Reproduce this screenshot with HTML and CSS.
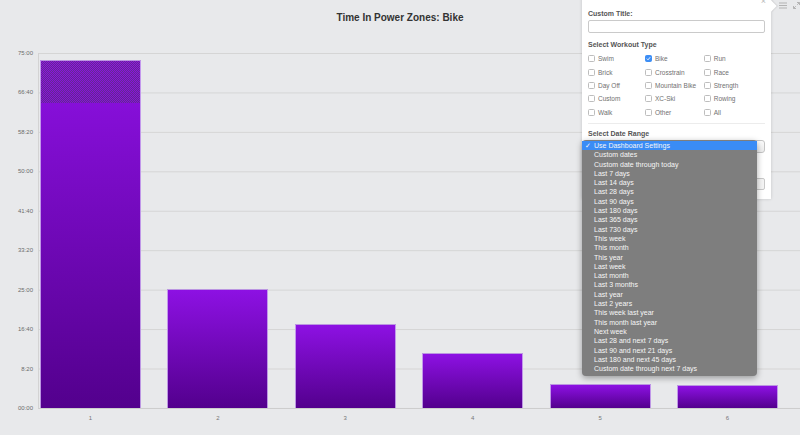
FILE: index.html
```html
<!DOCTYPE html>
<html>
<head>
<meta charset="utf-8">
<title>Time In Power Zones: Bike</title>
<link rel="stylesheet" href="styles.css">
</head>
<body>
<h1 class="title">Time In Power Zones: Bike</h1>
<div class="chart">
  <div class="yaxis">
    <span>75:00</span><span>66:40</span><span>58:20</span><span>50:00</span><span>41:40</span><span>33:20</span><span>25:00</span><span>16:40</span><span>8:20</span><span>00:00</span>
  </div>
  <div class="plotwrap">
    <div class="plot">
      <div class="bar dither" style="height:348px"></div>
      <div class="bar" style="height:119px"></div>
      <div class="bar" style="height:84px"></div>
      <div class="bar" style="height:55px"></div>
      <div class="bar" style="height:24px"></div>
      <div class="bar" style="height:23px"></div>
    </div>
    <div class="xlabels"><span>1</span><span>2</span><span>3</span><span>4</span><span>5</span><span>6</span></div>
  </div>
</div>

<div class="tools">
  <svg class="ico" width="8" height="7" viewBox="0 0 8 7"><path d="M0 1h8M0 3.5h8M0 6h8" stroke="#b3b3b3" stroke-width="1"/></svg>
  <svg class="ico" width="7" height="7" viewBox="0 0 7 7"><path d="M4 0.5h2.5v2.5M6.5 0.5L4.2 2.8M3 6.5H0.5V4M0.5 6.5L2.8 4.2" stroke="#b3b3b3" stroke-width="1" fill="none"/></svg>
</div>

<div class="panel">
  <span class="close">×</span>
  <div class="hd">Custom Title:</div>
  <div class="input"></div>
  <div class="hd gap-hd">Select Workout Type</div>
  <div class="types">
    <label class="opt"><span class="box"></span>Swim</label>
    <label class="opt"><span class="box on"><svg width="5" height="5" viewBox="0 0 5 5"><path d="M0.8 2.6L2 3.8L4.2 1.2" stroke="#fff" stroke-width="0.9" fill="none"/></svg></span>Bike</label>
    <label class="opt"><span class="box"></span>Run</label>
    <label class="opt"><span class="box"></span>Brick</label>
    <label class="opt"><span class="box"></span>Crosstrain</label>
    <label class="opt"><span class="box"></span>Race</label>
    <label class="opt"><span class="box"></span>Day Off</label>
    <label class="opt"><span class="box"></span>Mountain Bike</label>
    <label class="opt"><span class="box"></span>Strength</label>
    <label class="opt"><span class="box"></span>Custom</label>
    <label class="opt"><span class="box"></span>XC-Ski</label>
    <label class="opt"><span class="box"></span>Rowing</label>
    <label class="opt"><span class="box"></span>Walk</label>
    <label class="opt"><span class="box"></span>Other</label>
    <label class="opt"><span class="box"></span>All</label>
  </div>
  <div class="divider"></div>
  <div class="hd gap-hd2">Select Date Range</div>
  <div class="select"></div>
  <div class="btn"></div>
</div>

<ul class="menu">
  <li class="sel">Use Dashboard Settings</li>
  <li>Custom dates</li>
  <li>Custom date through today</li>
  <li>Last 7 days</li>
  <li>Last 14 days</li>
  <li>Last 28 days</li>
  <li>Last 90 days</li>
  <li>Last 180 days</li>
  <li>Last 365 days</li>
  <li>Last 730 days</li>
  <li>This week</li>
  <li>This month</li>
  <li>This year</li>
  <li>Last week</li>
  <li>Last month</li>
  <li>Last 3 months</li>
  <li>Last year</li>
  <li>Last 2 years</li>
  <li>This week last year</li>
  <li>This month last year</li>
  <li>Next week</li>
  <li>Last 28 and next 7 days</li>
  <li>Last 90 and next 21 days</li>
  <li>Last 180 and next 45 days</li>
  <li>Custom date through next 7 days</li>
</ul>
</body>
</html>
```

FILE: styles.css
```css
* { box-sizing: border-box; }
html, body { margin: 0; padding: 0; }
body {
  width: 800px;
  height: 435px;
  overflow: hidden;
  position: relative;
  background: #e8e9eb;
  font-family: "Liberation Sans", Arial, Helvetica, sans-serif;
}

.title {
  margin: 0;
  height: 49px;
  padding-top: 12px;
  font-size: 10px;
  line-height: 12px;
  font-weight: bold;
  color: #333;
  text-align: center;
}

.chart { display: flex; }

.yaxis {
  width: 38px;
  height: 363px;
  flex: none;
  display: flex;
  flex-direction: column;
  justify-content: space-between;
  align-items: flex-end;
  padding-right: 5px;
}
.yaxis span { font-size: 6px; line-height: 8px; color: #6b6b6b; }

.plotwrap { flex: 1; padding-top: 4px; }

.plot {
  height: 356px;
  border-left: 1px solid #d3d3d3;
  border-bottom: 1px solid #cdcdcd;
  background: linear-gradient(#d5d5d5 0 1px, transparent 1px) 0 0 / 100% 39.444px;
  display: flex;
  align-items: flex-end;
  gap: 26.4px;
  padding-left: 1px;
}

.bar {
  width: 101px;
  flex: none;
  border: 1px solid rgba(206, 176, 240, 0.85);
  border-bottom: none;
  background: linear-gradient(#8d11e3, #53008d);
}
.bar.dither { position: relative; }
.bar.dither::before {
  content: "";
  position: absolute;
  left: 0; right: 0; top: 0;
  height: 42px;
  background: repeating-conic-gradient(rgba(75, 65, 90, 0.6) 0 25%, transparent 0 50%) 0 0 / 2px 2px;
}

.xlabels {
  display: flex;
  gap: 26.4px;
  padding-left: 2px;
  margin-top: 5px;
}
.xlabels span {
  width: 101px;
  flex: none;
  text-align: center;
  font-size: 6px;
  line-height: 8px;
  color: #777;
}

.tools {
  position: absolute;
  top: 2px;
  left: 779px;
  display: flex;
  gap: 6px;
}
.ico { display: block; }

.panel {
  position: absolute;
  left: 582px;
  top: -12px;
  width: 189px;
  height: 211px;
  background: #fff;
  box-shadow: 0 0 3px rgba(0, 0, 0, 0.16);
  padding: 21px 6px 0 6px;
}
.panel::after {
  content: "";
  position: absolute;
  right: -4px;
  top: 14px;
  width: 8px;
  height: 8px;
  background: #fff;
  transform: rotate(45deg);
  box-shadow: 1px -1px 1px rgba(0, 0, 0, 0.08);
}
.close {
  position: absolute;
  right: 5px;
  top: 9px;
  font-size: 9px;
  line-height: 9px;
  color: #bbb;
}

.hd {
  font-size: 7px;
  line-height: 9px;
  font-weight: bold;
  color: #555;
}
.gap-hd { margin-top: 7px; }
.gap-hd2 { margin-top: 5px; }

.input {
  height: 13px;
  margin-top: 2px;
  border: 1px solid #cacaca;
  border-radius: 2px;
}

.types {
  margin-top: 3.3px;
  display: grid;
  grid-template-columns: 57px 58.7px auto;
  grid-auto-rows: 13.3px;
  align-items: center;
}
.opt {
  display: flex;
  align-items: center;
  gap: 3px;
  font-size: 6.5px;
  color: #707070;
  white-space: nowrap;
}
.box {
  width: 7px;
  height: 7px;
  flex: none;
  border: 1px solid #bdbdbd;
  border-radius: 1.5px;
  background: #fff;
  display: flex;
  align-items: center;
  justify-content: center;
}
.box.on { background: #3d8ef5; border-color: #3d8ef5; }

.divider {
  margin-top: 4px;
  height: 1px;
  background: #ececec;
}

.select {
  margin-top: 2px;
  height: 13px;
  border: 1px solid #c4c4c4;
  border-radius: 3px;
  background: linear-gradient(#fbfbfb, #ececec);
}
.btn {
  margin-top: 25px;
  height: 12px;
  border: 1px solid #c8c8c8;
  border-radius: 2px;
  background: #f4f4f4;
}

.menu {
  position: absolute;
  left: 582px;
  top: 140px;
  width: 175px;
  margin: 0;
  padding: 1px 0 3px;
  list-style: none;
  background: #7e7e7e;
  border-radius: 4px;
  box-shadow: 0 2px 6px rgba(0, 0, 0, 0.35);
}
.menu li {
  position: relative;
  height: 9.3px;
  font-size: 7px;
  line-height: 9.3px;
  color: #f6f6f6;
  padding-left: 12px;
  white-space: nowrap;
}
.menu li.sel { background: #3a8cf6; }
.menu li.sel::before {
  content: "✓";
  position: absolute;
  left: 3px;
  top: 0;
}
```
